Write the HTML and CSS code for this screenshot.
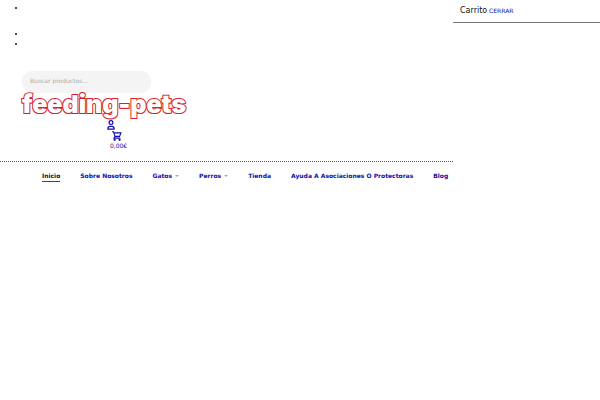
FILE: index.html
```html
<!DOCTYPE html>
<html lang="es">
<head>
  <meta charset="UTF-8">
  <meta name="viewport" content="width=device-width, initial-scale=1.0">
  <title>feeding-pets</title>
  <link rel="stylesheet" href="styles.css">
</head>
<body>
  <div class="page">
    <header class="site-header">
      <ul class="top-list">
        <li></li>
        <li></li>
        <li></li>
      </ul>
      <div class="header-main">
        <form class="search">
          <input class="search-input" type="search" placeholder="Buscar productos..." aria-label="Buscar productos">
        </form>
        <a class="logo" href="#">feeding-pets</a>
        <div class="tools">
          <a class="account" href="#" aria-label="Mi cuenta">
            <svg width="8" height="10" viewBox="0 0 8 10" fill="none" stroke="currentColor" stroke-width="1.2">
              <circle cx="4" cy="2.6" r="1.9"/>
              <path d="M.9 9.2V8.4C.9 7 1.8 6.3 3 6.3h2C6.2 6.3 7.1 7 7.1 8.4V9.2Z"/>
            </svg>
          </a>
          <a class="cart" href="#">
            <svg width="10" height="10" viewBox="0 0 10 10" fill="none" stroke="currentColor" stroke-width="1.1">
              <path d="M0 .8h1.5L3 5.4h4.6L8.9 1.9H2M3 5.4L2 7.1h6.3"/>
              <circle cx="2.6" cy="8.8" r=".6"/>
              <circle cx="7.6" cy="8.8" r=".6"/>
            </svg>
            <span class="cart-total">0,00€</span>
          </a>
        </div>
      </div>
      <nav class="menu">
        <a class="active" href="#">Inicio</a>
        <a href="#">Sobre Nosotros</a>
        <a class="has-children" href="#">Gatos</a>
        <a class="has-children" href="#">Perros</a>
        <a href="#">Tienda</a>
        <a href="#">Ayuda A Asociaciones O Protectoras</a>
        <a href="#">Blog</a>
      </nav>
    </header>
    <aside class="cart-panel">
      <div class="cart-head">
        <span class="cart-title">Carrito</span>
        <a class="cart-close" href="#">CERRAR</a>
      </div>
    </aside>
  </div>
</body>
</html>
```

FILE: styles.css
```css
* {
  box-sizing: border-box;
}

body {
  margin: 0;
  background: #fff;
  color: #111;
  font-family: "DejaVu Sans", sans-serif;
  font-size: 6px;
  line-height: 10px;
}

a {
  color: #0d0daa;
  text-decoration: none;
}

svg {
  display: block;
}

.page {
  display: grid;
  grid-template-columns: minmax(0, 1fr) 147px;
}

.top-list {
  display: flex;
  flex-direction: column;
  margin: 0;
  padding: 3px 0 0 22px;
  list-style: none;
}

.top-list li {
  height: 10px;
}

.top-list li:first-child {
  margin-bottom: 16px;
}

.top-list li::before {
  content: "";
  display: block;
  width: 2px;
  height: 2px;
  margin: 4px 0 0 -7px;
  border-radius: 1px;
  background: #111;
}

.header-main {
  padding: 22px 22px 10px;
}

.search {
  margin: 0;
}

.search-input {
  display: block;
  width: 129px;
  height: 22px;
  padding: 0 8px 4px;
  border: 0;
  border-radius: 10px;
  background: #f4f4f4;
  font: inherit;
  outline: none;
  appearance: none;
}

.search-input::placeholder {
  color: #aaa;
}

.logo {
  display: block;
  width: max-content;
  padding-bottom: 4px;
  color: #fff;
  font-family: Inter, sans-serif;
  font-size: 25px;
  font-weight: 900;
  line-height: 23px;
  paint-order: stroke fill;
  -webkit-text-stroke: 2px #d8202c;
  text-shadow: 0 1px 0 #d8202c;
}

.tools {
  display: flex;
  flex-direction: column;
  align-items: flex-start;
  padding-left: 85px;
}

.cart {
  display: flex;
  flex-direction: column;
  padding: 1px 0 0 3px;
}

.cart svg {
  margin-left: 2px;
}

.menu {
  display: flex;
  gap: 20px;
  padding: 9px 0 0 42px;
  border-top: 1px dotted #555;
  font-weight: 700;
  white-space: nowrap;
}

.menu .active {
  border-bottom: 1px solid #444;
  color: #111;
}

.has-children::after {
  content: "";
  display: inline-block;
  margin: 0 0 1px 3px;
  border: 2px solid transparent;
  border-top-color: #aaa;
  border-bottom: 0;
}

.cart-panel {
  align-self: start;
}

.cart-head {
  padding: 6px 7px;
  border-bottom: 1px solid #777;
}

.cart-title {
  font-size: 8px;
}

.cart-close {
  font-size: 6px;
}
```
